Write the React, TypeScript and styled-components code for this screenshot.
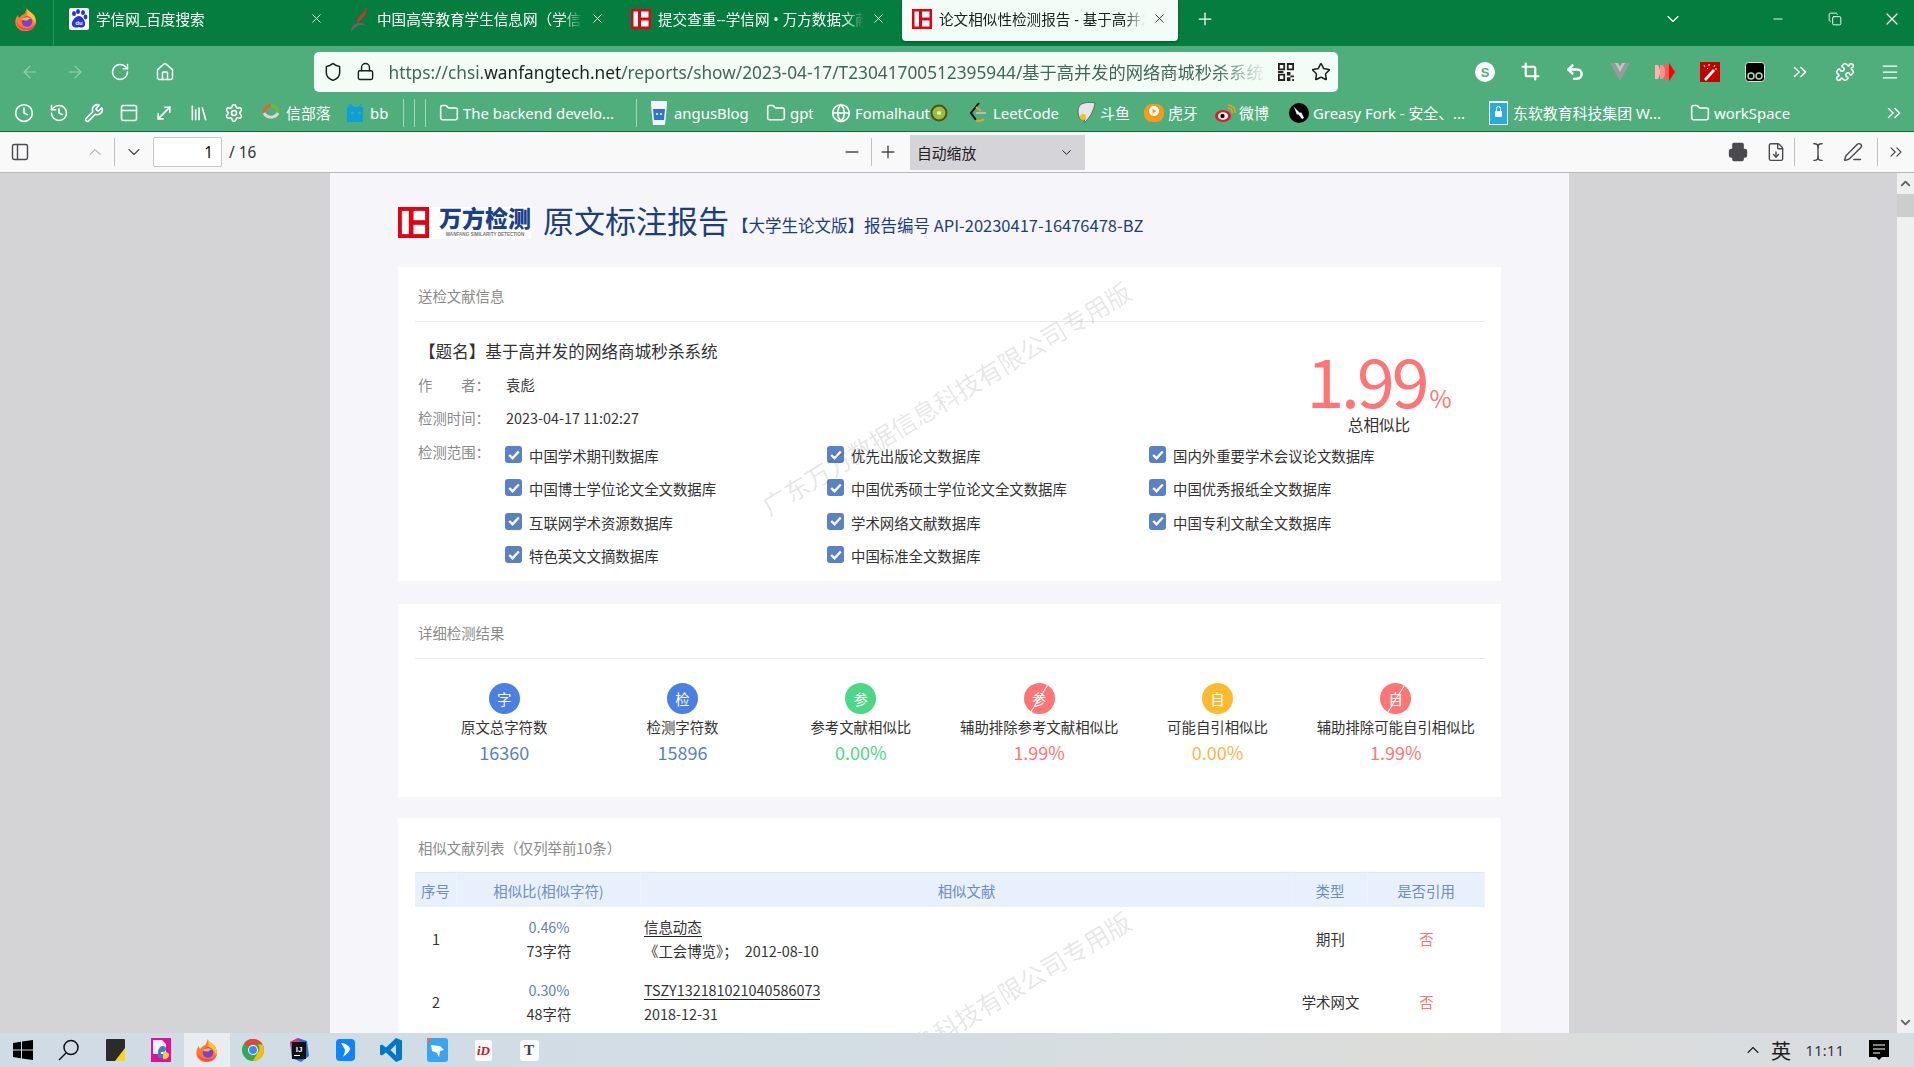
import * as React from 'react';
import styled, { createGlobalStyle } from 'styled-components';
import {
  ArrowLeft,
  ArrowRight,
  ChevronDown,
  ChevronUp,
  ChevronsRight,
  Clock,
  Copy,
  Crop,
  FileDown,
  Folder,
  Globe,
  History,
  House,
  Library,
  Lock,
  Menu,
  Minus,
  MoveDiagonal,
  PanelLeft,
  PanelTop,
  PenLine,
  Plus,
  Printer,
  Puzzle,
  RotateCw,
  Settings,
  Shield,
  Star,
  TextCursor,
  Undo2,
  Wrench,
  X,
} from 'lucide-react';

const UI_FONT = `"Noto Sans", "Noto Sans CJK SC", sans-serif`;
const DOC_FONT = `"Noto Sans CJK SC", "Noto Sans", sans-serif`;

const GlobalStyle = createGlobalStyle`
  html, body {
    margin: 0;
    height: 100%;
    overflow: hidden;
  }
  body {
    font-family: ${UI_FONT};
  }
  * {
    box-sizing: border-box;
  }
`;

const Screen = styled.div`
  width: 1914px;
  height: 1067px;
  display: flex;
  flex-direction: column;
  overflow: hidden;
`;

/* browser chrome */

const TabBar = styled.div`
  height: 46px;
  flex: none;
  background-color: #047d3e;
  display: flex;
  align-items: flex-start;
  color: #fff;
`;

const AppButton = styled.div`
  width: 54px;
  height: 46px;
  flex: none;
  display: flex;
  align-items: center;
  justify-content: center;
  padding: 0 0 8px 0;
  border-right: 1px solid #2a9360;
  margin-right: 5px;
`;

const Tab = styled.div<{ $active?: boolean }>`
  width: 276px;
  height: 41px;
  flex: none;
  margin-right: 5px;
  display: flex;
  align-items: center;
  padding: 0 11px 4px 10px;
  gap: 7px;
  font-size: 14.6px;
  border-radius: 0 0 4px 4px;
  background-color: ${(p) => (p.$active ? '#f3fcf7' : 'transparent')};
  color: ${(p) => (p.$active ? '#15231b' : '#fff')};
  box-shadow: ${(p) => (p.$active ? '0 1px 3px rgba(0, 0, 0, 0.3)' : 'none')};
`;

const TabTitle = styled.div`
  flex: 1;
  white-space: nowrap;
  overflow: hidden;
  mask-image: linear-gradient(to right, #000 90%, transparent);
`;

const NewTab = styled.div`
  width: 44px;
  height: 37px;
  flex: none;
  display: flex;
  align-items: center;
  justify-content: center;
`;

const WindowControls = styled.div`
  margin-left: auto;
  height: 38px;
  display: flex;
  align-items: center;
  gap: 35px;
  padding-right: 11px;
`;

const IconSlot = styled.div<{ $w: number; $mr?: number }>`
  width: ${(p) => p.$w}px;
  flex: none;
  display: flex;
  align-items: center;
  justify-content: center;
  margin-right: ${(p) => p.$mr || 0}px;
`;

const NavBar = styled.div`
  height: 46px;
  flex: none;
  background-color: #50ae7c;
  display: flex;
  align-items: center;
  padding: 5px 0 0 7.5px;
  color: #fff;
`;

const AddressBar = styled.div`
  width: 1024px;
  height: 40px;
  flex: none;
  margin: 0 125px 0 126px;
  background-color: #f3fcf7;
  border-radius: 5px;
  display: flex;
  align-items: center;
  padding-left: 9px;
  color: #15231b;
`;

const UrlText = styled.div`
  width: 879px;
  flex: none;
  font-size: 17.25px;
  color: #42665a;
  white-space: nowrap;
  overflow: hidden;
  mask-image: linear-gradient(to right, #000 94%, transparent);
`;

const UrlHost = styled.span`
  color: #15231b;
`;

const BookmarkBar = styled.div`
  height: 40px;
  flex: none;
  background-color: #50ae7c;
  border-bottom: 1px solid #04743a;
  display: flex;
  align-items: center;
  padding: 2px 0 0 6.5px;
  color: #fff;
  font-size: 14.9px;
`;

const Bookmark = styled.div<{ $w?: number; $ml?: number }>`
  width: ${(p) => (p.$w ? `${p.$w}px` : 'auto')};
  margin-left: ${(p) => p.$ml || 0}px;
  flex: none;
  display: flex;
  align-items: center;
  white-space: nowrap;
`;

const BookmarkIcon = styled.div`
  width: 24px;
  flex: none;
  display: flex;
  align-items: center;
`;

const BookmarkSep = styled.div<{ $mr: number }>`
  width: 1px;
  height: 28px;
  flex: none;
  background-color: #a7d6bc;
  margin-right: ${(p) => p.$mr}px;
`;

const Overflow = styled.div`
  margin-left: auto;
  padding-right: 9px;
  display: flex;
`;

/* pdf viewer */

const PdfToolbar = styled.div`
  height: 41px;
  flex: none;
  background-color: #f9f9fa;
  border-bottom: 1px solid #b8b8b8;
  display: flex;
  align-items: center;
  color: #4a4a4f;
  font-size: 15.4px;
`;

const ToolSep = styled.div<{ $mr?: number }>`
  width: 1px;
  height: 28px;
  flex: none;
  background-color: #c0c0c4;
  margin-right: ${(p) => p.$mr || 0}px;
`;

const PageInput = styled.div`
  width: 69px;
  height: 30px;
  flex: none;
  margin-right: 7px;
  background-color: #fff;
  border: 1px solid #c8c8cc;
  border-radius: 2px;
  display: flex;
  align-items: center;
  justify-content: flex-end;
  padding-right: 8px;
  color: #0c0c0d;
`;

const PageCount = styled.div`
  width: 604px;
  flex: none;
  color: #333;
`;

const ZoomSelect = styled.div`
  width: 175px;
  height: 35px;
  flex: none;
  margin-left: 6px;
  background-color: #d4d4d9;
  display: flex;
  align-items: center;
  justify-content: space-between;
  padding: 0 11px 0 7px;
  font-size: 14.8px;
  color: #222;
`;

const ToolSpacer = styled.div`
  width: 634px;
  flex: none;
`;

const Viewer = styled.div`
  flex: 1;
  min-height: 0;
  display: flex;
  background-color: #d4d4d7;
`;

const PageArea = styled.div`
  flex: 1;
  display: flex;
  justify-content: center;
  overflow: hidden;
  padding-left: 2px;
`;

const Scrollbar = styled.div`
  width: 17px;
  flex: none;
  background-color: #f0f0f0;
  display: flex;
  flex-direction: column;
  align-items: center;
  color: #606060;
`;

const ScrollButton = styled.div`
  height: 21px;
  flex: none;
  display: flex;
  align-items: center;
  justify-content: center;
`;

const ScrollThumb = styled.div`
  width: 100%;
  height: 23px;
  flex: none;
  background-color: #cdcdcd;
`;

const ScrollTrack = styled.div`
  flex: 1;
`;

const Page = styled.div`
  position: relative;
  width: 1239px;
  flex: none;
  background-color: #f5f5fa;
  padding: 0 68px;
  font-family: ${DOC_FONT};
  overflow: hidden;
`;

const Watermark = styled.div<{ $top: number }>`
  position: absolute;
  left: 616px;
  top: ${(p) => p.$top}px;
  transform: translate(-50%, -50%) rotate(-31deg);
  font-size: 25px;
  line-height: 1;
  white-space: nowrap;
  color: rgba(0, 0, 0, 0.11);
  pointer-events: none;
`;

const ReportHeader = styled.div`
  height: 35px;
  margin: 32px 0 27px;
  display: flex;
  align-items: center;
`;

const LogoBlock = styled.div`
  height: 32px;
  flex: none;
  display: flex;
  align-items: center;
  gap: 10px;
  background-color: #fff;
`;

const LogoWords = styled.div`
  display: flex;
  flex-direction: column;
  align-items: center;
  margin-top: -3px;
  color: #1a3f8c;
`;

const LogoName = styled.div`
  font-size: 23px;
  line-height: 25px;
  font-weight: 900;
  white-space: nowrap;
`;

const LogoSub = styled.div`
  margin-top: 2px;
  font-family: "Liberation Sans", sans-serif;
  font-size: 4.6px;
  line-height: 6px;
  font-weight: 700;
  color: #777;
  white-space: nowrap;
`;

const ReportTitle = styled.div`
  margin: -7px 0 0 12px;
  font-size: 31px;
  color: #1c3f7c;
  white-space: nowrap;
`;

const ReportMeta = styled.div`
  margin: 5px 0 0 3px;
  font-size: 16.5px;
  color: #1c3f7c;
  white-space: nowrap;
`;

const Card = styled.section<{ $mb?: number }>`
  background-color: #fff;
  padding: 0 16px 0 17px;
  margin-bottom: ${(p) => p.$mb || 0}px;
`;

const CardTitle = styled.div<{ $divided?: boolean }>`
  height: 55px;
  padding: 19px 0 0 3px;
  font-size: 14.4px;
  line-height: 20px;
  color: #8a8a8a;
  border-bottom: ${(p) => (p.$divided ? '1.5px solid #e9e9ec' : 'none')};
`;

const InfoTop = styled.div`
  display: flex;
  height: 117px;
  padding: 12px 0 0 3px;
`;

const InfoFields = styled.div`
  flex: 1;
`;

const DocTitle = styled.div`
  height: 34px;
  margin-left: 1px;
  font-size: 16.6px;
  line-height: 34px;
  color: #333;
  white-space: nowrap;
`;

const FieldRow = styled.div`
  height: 33px;
  display: flex;
  font-size: 14.4px;
  line-height: 33px;
  color: #333;
`;

const FieldLabel = styled.div`
  width: 88px;
  flex: none;
  color: #8a8a8a;
  white-space: pre;
`;

const Score = styled.div`
  width: 212px;
  flex: none;
  margin-top: 28px;
  display: flex;
  flex-direction: column;
  align-items: center;
`;

const ScoreValue = styled.div`
  font-size: 68px;
  line-height: 33px;
  letter-spacing: -3px;
  color: #ff7474;
  white-space: nowrap;
`;

const ScorePercent = styled.span`
  font-size: 24px;
  letter-spacing: 0;
  margin-left: 3px;
`;

const ScoreLabel = styled.div`
  font-size: 15.6px;
  line-height: 20px;
  color: #333;
`;

const RangeRow = styled.div`
  display: flex;
  padding: 0 0 9px 3px;
  font-size: 14.4px;
`;

const RangeLabel = styled.div`
  width: 87px;
  flex: none;
  line-height: 26px;
  color: #8a8a8a;
`;

const RangeGrid = styled.div`
  flex: 1;
  display: grid;
  grid-template-columns: repeat(3, 322px);
  grid-auto-rows: 33.3px;
`;

const RangeItem = styled.div`
  display: flex;
  align-items: center;
  gap: 7px;
  color: #333;
  white-space: nowrap;
`;

const CheckBox = styled.div`
  width: 17px;
  height: 17px;
  flex: none;
  margin-top: -2px;
  border-radius: 3px;
  background-color: #5a80c8;
  display: flex;
  align-items: center;
  justify-content: center;
`;

const StatsRow = styled.div`
  display: grid;
  grid-template-columns: repeat(6, 1fr);
  padding: 24px 0 33px;
`;

const Stat = styled.div`
  display: flex;
  flex-direction: column;
  align-items: center;
`;

const StatBadge = styled.div<{ $color: string; $struck?: boolean }>`
  position: relative;
  width: 31px;
  height: 31px;
  border-radius: 50%;
  overflow: hidden;
  background-color: ${(p) => p.$color};
  color: #fff;
  font-size: 14.4px;
  display: flex;
  align-items: center;
  justify-content: center;
  &::after {
    content: '';
    display: ${(p) => (p.$struck ? 'block' : 'none')};
    position: absolute;
    left: 50%;
    top: 50%;
    width: 34px;
    height: 1px;
    background-color: #fff;
    transform: translate(-50%, -50%) rotate(-58deg);
  }
`;

const StatLabel = styled.div`
  margin-top: 3px;
  font-size: 14.4px;
  line-height: 20px;
  color: #333;
  white-space: nowrap;
`;

const StatValue = styled.div<{ $color: string }>`
  margin-top: 3px;
  font-size: 18px;
  line-height: 24px;
  color: ${(p) => p.$color};
`;

const ListTitle = styled(CardTitle)`
  height: 54px;
  padding-top: 20px;
`;

const SimilarTable = styled.div`
  display: grid;
  grid-template-columns: 42px 184px 652px 75px 117px;
  font-size: 14.4px;
  color: #333;
`;

const HeadCell = styled.div`
  height: 35px;
  background-color: #e8f0fb;
  border-top: 1px solid #e4e6ea;
  border-right: 1px solid #edf2fb;
  display: flex;
  align-items: center;
  justify-content: center;
  color: #6d8cc9;
  white-space: nowrap;
`;

const Cell = styled.div`
  height: 63px;
  display: flex;
  flex-direction: column;
  align-items: center;
  justify-content: center;
  gap: 4px;
  line-height: 20px;
  white-space: nowrap;
`;

const DocCell = styled(Cell)`
  align-items: flex-start;
  padding-left: 3px;
`;

const DocLink = styled.span`
  border-bottom: 1px solid #222;
  line-height: 19px;
`;

const Ratio = styled.span`
  color: #5b7fc7;
`;

const NotCited = styled.span`
  color: #ff7474;
`;

/* taskbar */

const Taskbar = styled.div`
  height: 34px;
  flex: none;
  background: linear-gradient(to right, #d0dbe5 0%, #d3dde4 45%, #dcdcd9 75%, #d8dde2 100%);
  display: flex;
  align-items: center;
`;

const TaskIcon = styled.div<{ $active?: boolean }>`
  width: 46px;
  height: 34px;
  flex: none;
  display: flex;
  align-items: center;
  justify-content: center;
  background-color: ${(p) => (p.$active ? '#e8edf2' : 'transparent')};
`;

const Tray = styled.div`
  margin-left: auto;
  display: flex;
  align-items: center;
  color: #1c1c1c;
`;

const ImeGlyph = styled.div`
  width: 30px;
  font-size: 20px;
  text-align: center;
`;

const ClockText = styled.div`
  width: 58px;
  font-size: 14.4px;
  letter-spacing: 0.4px;
  text-align: center;
  color: #333;
`;

const TextTile = styled.div`
  width: 19px;
  height: 21px;
  background-color: #fbfbfb;
  border-radius: 3px;
  font-family: "Liberation Serif", serif;
  font-weight: 700;
  font-size: 15px;
  line-height: 21px;
  text-align: center;
  color: #444;
`;

/* drawn icons */

const Firefox = ({ size = 20 }: { size?: number }) => (
  <svg width={size} height={size} viewBox="0 0 24 24">
    <path d="M12 0c1 3 5 4 8 8 3 5 2 11-2 14-4 3-11 3-15-1C-1 17 0 11 3 7c0 2 1 3 2 3 1-2 3-3 5-4 1-2 2-4 2-6z" fill="#ff7a2e" />
    <path d="M12 0c1 3 5 4 8 8 2 3 2 6 1 9-1-4-4-8-8-9 0-3 0-5-1-8z" fill="#ffc42e" />
    <path d="M1 14c1 6 6 9 11 9 5 0 9-3 10-8-2 4-6 6-10 6-5 0-9-3-11-7z" fill="#ff3d68" />
    <circle cx="12.500" cy="14" r="5.500" fill="#7b3fd1" />
    <path d="M7 12c2-3 7-3 10-1-2 0-3 1-4 2-2 0-5 0-6-1z" fill="#ffb13d" />
  </svg>
);

const WanfangMark = ({ size = 20 }: { size?: number }) => (
  <svg width={size} height={size} viewBox="0 0 20 20">
    <rect width="20" height="20" fill="#e60012" />
    <rect x="2.500" y="2.500" width="4.500" height="15" fill="#fff" />
    <rect x="10" y="2.500" width="7.500" height="6" fill="#fff" />
    <rect x="10" y="11.500" width="7.500" height="6" fill="#fff" />
  </svg>
);

const BaiduPaw = () => (
  <svg width="20" height="22" viewBox="0 0 20 22">
    <rect width="20" height="22" rx="2" fill="#fff" />
    <g fill="#2932e1">
      <ellipse cx="5" cy="5.500" rx="2" ry="2.600" />
      <ellipse cx="9" cy="3.500" rx="2" ry="2.600" />
      <ellipse cx="14" cy="4.500" rx="2" ry="2.600" />
      <ellipse cx="16.500" cy="9" rx="1.900" ry="2.400" />
      <path d="M10 8c3 0 7 5 6 9-1 3-4 3-6 2-2 1-6 1-7-2s3-9 7-9z" />
    </g>
    <text x="10" y="17" fontSize="6" fontFamily="Liberation Sans" fontWeight="700" fill="#fff" textAnchor="middle">
      du
    </text>
  </svg>
);

const ChsiMark = () => (
  <svg width="20" height="26" viewBox="0 0 20 26">
    <path d="M16 0c-1 6-3 7-6 10-3 3-4 7-1 9-1-4 4-7 6-10 1-3 2-6 1-9z" fill="#d8302a" />
    <path d="M1 26c0-6 3-9 9-9 3 0 5 1 5 3-3-2-7-1-9 1-2 1-3 3-5 5z" fill="#5d6b66" />
  </svg>
);

const StatIconS = () => (
  <svg width="20" height="20" viewBox="0 0 20 20">
    <circle cx="10" cy="10" r="10" fill="#fff" />
    <text x="10" y="14.500" fontSize="13" fontWeight="700" fontFamily="Liberation Sans" fill="#50ae7c" textAnchor="middle">
      S
    </text>
  </svg>
);

const VueMark = () => (
  <svg width="20" height="18" viewBox="0 0 20 18">
    <path d="M0 0h6l4 7 4-7h6L10 18z" fill="#9a9a9a" />
    <path d="M5 0h3l2 3.500L12 0h3l-5 9z" fill="#c4c4c4" />
  </svg>
);

const RedArrows = () => (
  <svg width="20" height="18" viewBox="0 0 20 18">
    <path d="M0 2h3l3 7-3 7H0z" fill="#ffb3b3" />
    <path d="M5 2h3l3 7-3 7H5z" fill="#ff8f8f" />
    <path d="M10 1h3l3 8-3 8h-3z" fill="#ff5a5a" />
    <path d="M14 0l6 9-6 9z" fill="#ff0000" />
  </svg>
);

const WandTile = () => (
  <svg width="20" height="20" viewBox="0 0 20 20">
    <rect width="20" height="20" fill="#c40000" />
    <path d="M4 17l9-10 2 2-9 10z" fill="#fff" />
    <path d="M4 3l1 2M9 2v2M15 3l-1 2M17 7h-2M7 6l1 1" stroke="#fff" strokeWidth="1" />
  </svg>
);

const TamperTile = () => (
  <svg width="20" height="20" viewBox="0 0 20 20">
    <rect x="0.500" y="0.500" width="19" height="19" rx="3" fill="#000" stroke="#cfe6da" />
    <circle cx="6" cy="14" r="3" fill="none" stroke="#a6dfbf" strokeWidth="1.500" />
    <circle cx="14" cy="14" r="3" fill="none" stroke="#a6dfbf" strokeWidth="1.500" />
  </svg>
);

const QrCode = () => (
  <svg width="16" height="18" viewBox="0 0 9 10" fill="#222">
    <path d="M0 0h4v4H0zM1 1v2h2V1zM5 0h4v4H5zM6 1v2h2V1zM0 6h4v4H0zM1 7v2h2V7zM5 5h2v2H5zM7 7h2v1H7zM5 8h2v2H5zM8 9h1v1H8zM0 4.500h3v1H0z" fillRule="evenodd" />
  </svg>
);

const WindowsLogo = () => (
  <svg width="20" height="20" viewBox="0 0 20 20" fill="#000">
    <path d="M0 3l8-1.200V9.500H0zM9 1.600L20 0v9.500H9zM0 10.500h8v7.700L0 17zM9 10.500h11V20L9 18.400z" />
  </svg>
);

const SearchGlass = () => (
  <svg width="22" height="22" viewBox="0 0 22 22" fill="none" stroke="#111" strokeWidth="1.500">
    <circle cx="13" cy="8.500" r="7" />
    <path d="M8 14l-7 7" />
  </svg>
);

const StickyNote = () => (
  <svg width="19" height="22" viewBox="0 0 19 22">
    <rect width="19" height="22" rx="1" fill="#2b2b2b" />
    <path d="M19 9v13H9z" fill="#ffd21f" />
  </svg>
);

const PyCharmTile = () => (
  <svg width="20" height="24" viewBox="0 0 20 24">
    <rect width="20" height="24" fill="#e0109a" />
    <path d="M2 2h9l4 4v10H2z" fill="#f4f1f6" />
    <path d="M9 9c3-2 6-1 6 2s-3 3-5 3v3h5c0 3-6 5-8 2v-6c0-2 2-3 2-4z" fill="#3f7fc0" />
    <path d="M12 14c3 0 6 0 6 3s-3 5-6 4z" fill="#f6c93f" />
  </svg>
);

const ChromeLogo = () => (
  <svg width="22" height="22" viewBox="0 0 22 22">
    <circle cx="11" cy="11" r="11" fill="#34a853" />
    <path d="M11 0a11 11 0 0 1 9.500 5.500H11a5.500 5.500 0 0 0-5 3L2.500 3.800A11 11 0 0 1 11 0z" fill="#ea4335" />
    <path d="M20.500 5.500A11 11 0 0 1 11 22l4.700-8.300a5.500 5.500 0 0 0 0-8.200z" fill="#fbbc05" />
    <circle cx="11" cy="11" r="5" fill="#fff" />
    <circle cx="11" cy="11" r="4" fill="#4285f4" />
  </svg>
);

const IdeaTile = () => (
  <svg width="20" height="24" viewBox="0 0 20 24">
    <path d="M1 4l8-4 9 3 2 15-8 6-9-4z" fill="#2c6be0" />
    <path d="M1 4l8-4 3 6-9 6z" fill="#e8336b" />
    <rect x="3" y="4" width="14" height="17" fill="#111" />
    <text x="10" y="14" fontSize="8" fontWeight="700" fontFamily="Liberation Sans" fill="#fff" textAnchor="middle">
      IJ
    </text>
    <rect x="5" y="17" width="6" height="1" fill="#fff" />
  </svg>
);

const BlueFeather = () => (
  <svg width="19" height="22" viewBox="0 0 19 22">
    <rect width="19" height="22" rx="4" fill="#0a84ff" />
    <path d="M5 4c4 0 9 3 9 6-1 4-5 6-7 8 1-3 2-5 2-7-1-3-3-5-4-7z" fill="#fff" />
  </svg>
);

const VsCode = () => (
  <svg width="22" height="24" viewBox="0 0 22 24">
    <path d="M16 0l6 2.500v19L16 24 6 14.500 2 17.500 0 16.500V7.500l2-1 4 3zM16 6.500L10.500 12l5.500 5.500z" fill="#0078c8" fillRule="evenodd" />
  </svg>
);

const BirdTile = () => (
  <svg width="21" height="24" viewBox="0 0 21 24">
    <rect width="21" height="24" rx="3" fill="#3ca3f0" />
    <path d="M4 7l9 1 4 4-4 1-1 6-2-4-5-2z" fill="#fff" />
    <path d="M0 0h5L0 5z" fill="#f26b3a" />
  </svg>
);

const RedDTile = () => (
  <svg width="17" height="21" viewBox="0 0 17 21">
    <rect width="17" height="21" rx="2" fill="#fafafa" />
    <text x="8.500" y="15" fontSize="13" fontWeight="700" fontStyle="italic" fontFamily="Liberation Serif" fill="#d01420" textAnchor="middle">
      iD
    </text>
  </svg>
);

const NotifyIcon = () => (
  <svg width="20" height="21" viewBox="0 0 20 21">
    <path d="M0 0h20v17h-7l-3 3-3-3H0z" fill="#000" />
    <path d="M4 5h12M4 9h12M4 13h7" stroke="#fff" strokeWidth="1" />
  </svg>
);

const CheckMark = () => (
  <svg width="12" height="10" viewBox="0 0 12 10" fill="none" stroke="#fff" strokeWidth="2.400">
    <path d="M1.200 5l3.300 3.200L10.800 1.500" />
  </svg>
);

const XinbuluoIcon = () => (
  <svg width="18" height="20" viewBox="0 0 18 20" fill="none" strokeWidth="3">
    <path d="M9 2a8 8 0 0 0-7 8" stroke="#e8632a" />
    <path d="M9 2a8 8 0 0 1 7 8" stroke="#6dbb3a" />
    <path d="M2 10a8 8 0 0 0 14 0" stroke="#d9d9d9" />
  </svg>
);

const BilibiliIcon = () => (
  <svg width="20" height="20" viewBox="0 0 20 20">
    <path d="M5 1l3 3h4l3-3 1 1-2 2h3v15H1V4h3L2 2z" fill="#0e9fd8" />
    <circle cx="6.500" cy="10" r="1.300" fill="#50ae7c" />
    <circle cx="13.500" cy="10" r="1.300" fill="#50ae7c" />
  </svg>
);

const CupIcon = () => (
  <svg width="18" height="24" viewBox="0 0 18 24">
    <path d="M1 0h16v4l-2 20H3L1 4z" fill="#f3f6fb" />
    <path d="M3 8h12l-1 11H4z" fill="#2f74d0" />
    <circle cx="7" cy="13" r="1" fill="#fff" />
    <circle cx="11" cy="13" r="1" fill="#fff" />
  </svg>
);

const LeetCodeIcon = () => (
  <svg width="18" height="22" viewBox="0 0 18 22" fill="none" strokeWidth="2">
    <path d="M10 1L2 11l5 7" stroke="#111" />
    <path d="M7 18c2 2 6 1 8-1" stroke="#f0a020" />
    <path d="M7 11h10" stroke="#b9b9b9" />
    <path d="M7 5l5 4" stroke="#f0a020" />
  </svg>
);

const DouyuIcon = () => (
  <svg width="20" height="22" viewBox="0 0 20 22">
    <path d="M4 3c4-3 11-3 15-2-1 6-4 13-9 18l-2 2 1-5-5 1c-2-4-3-10 0-14z" fill="#e5e5e5" stroke="#555" strokeWidth="0.800" />
    <circle cx="7" cy="15" r="3" fill="#f3c01c" />
  </svg>
);

const HuyaIcon = () => (
  <svg width="20" height="20" viewBox="0 0 20 20">
    <rect y="1" width="20" height="18" rx="8" fill="#f79a1c" />
    <circle cx="10" cy="8" r="5" fill="#fff" />
    <path d="M8.500 5.500l4 2.500-4 2.500z" fill="#f79a1c" />
  </svg>
);

const WeiboIcon = () => (
  <svg width="21" height="18" viewBox="0 0 21 18">
    <ellipse cx="8" cy="12" rx="8" ry="6" fill="#e6162d" />
    <ellipse cx="8" cy="12" rx="5" ry="3.800" fill="#fff" />
    <circle cx="7.500" cy="12" r="2.200" fill="#111" />
    <path d="M13 1a7 7 0 0 1 7 8M13 4a4 4 0 0 1 4 5" fill="none" stroke="#f59a23" strokeWidth="1.600" />
  </svg>
);

const GreasyIcon = () => (
  <svg width="20" height="20" viewBox="0 0 20 20">
    <circle cx="10" cy="10" r="10" fill="#000" />
    <path d="M5 4l6 6 1-1 3 6-2 1-4-5-1 1z" fill="#fff" />
  </svg>
);

const NeusoftIcon = () => (
  <svg width="19" height="24" viewBox="0 0 19 24">
    <rect width="19" height="24" fill="#fff" />
    <rect x="1" y="2" width="17" height="21" fill="#29abe2" />
    <rect x="6" y="10" width="7" height="6" rx="1" fill="#fff" />
    <path d="M7.500 10V7.500a2 2 0 0 1 4 0V10" fill="none" stroke="#fff" />
  </svg>
);

const KiwiIcon = () => (
  <svg width="18" height="18" viewBox="0 0 18 18">
    <circle cx="9" cy="9" r="8.500" fill="#5c4a24" />
    <circle cx="9" cy="9" r="6.500" fill="#98bf3a" />
    <circle cx="9" cy="9" r="2" fill="#ecedc5" />
  </svg>
);

const ICON = { size: 20, strokeWidth: 1.9 };
const TOOL = { size: 20, strokeWidth: 1.7 };

const RANGES = [
  '中国学术期刊数据库',
  '优先出版论文数据库',
  '国内外重要学术会议论文数据库',
  '中国博士学位论文全文数据库',
  '中国优秀硕士学位论文全文数据库',
  '中国优秀报纸全文数据库',
  '互联网学术资源数据库',
  '学术网络文献数据库',
  '中国专利文献全文数据库',
  '特色英文文摘数据库',
  '中国标准全文数据库',
];

const STATS = [
  { glyph: '字', label: '原文总字符数', value: '16360', badge: '#4a80e2', color: '#5b7fc7' },
  { glyph: '检', label: '检测字符数', value: '15896', badge: '#4a80e2', color: '#5b7fc7' },
  { glyph: '参', label: '参考文献相似比', value: '0.00%', badge: '#4cd787', color: '#4cd787' },
  { glyph: '参', label: '辅助排除参考文献相似比', value: '1.99%', badge: '#ff7474', color: '#ff7474', struck: true },
  { glyph: '自', label: '可能自引相似比', value: '0.00%', badge: '#ffb92e', color: '#ffb248' },
  { glyph: '自', label: '辅助排除可能自引相似比', value: '1.99%', badge: '#ff7474', color: '#ff7474', struck: true },
];

const ROWS = [
  { no: '1', ratio: '0.46%', chars: '73字符', title: '信息动态', source: '《工会博览》；\u20022012-08-10', type: '期刊' },
  { no: '2', ratio: '0.30%', chars: '48字符', title: 'TSZY132181021040586073', source: '2018-12-31', type: '学术网文' },
];

const App = () => (
  <Screen>
    <GlobalStyle />
    <TabBar>
      <AppButton>
        <Firefox size={23} />
      </AppButton>
      <Tab>
        <BaiduPaw />
        <TabTitle>学信网_百度搜索</TabTitle>
        <X size={15} strokeWidth={1.4} />
      </Tab>
      <Tab>
        <ChsiMark />
        <TabTitle>中国高等教育学生信息网（学信网）</TabTitle>
        <X size={15} strokeWidth={1.4} />
      </Tab>
      <Tab>
        <WanfangMark />
        <TabTitle>提交查重--学信网 • 万方数据文献相似性</TabTitle>
        <X size={15} strokeWidth={1.4} />
      </Tab>
      <Tab $active>
        <WanfangMark />
        <TabTitle>论文相似性检测报告 - 基于高并发的网络</TabTitle>
        <X size={15} strokeWidth={1.4} />
      </Tab>
      <NewTab>
        <Plus size={20} strokeWidth={1.5} />
      </NewTab>
      <WindowControls>
        <IconSlot $w={22} $mr={48}>
          <ChevronDown size={20} strokeWidth={1.4} />
        </IconSlot>
        <IconSlot $w={22}>
          <Minus size={14} strokeWidth={1.6} />
        </IconSlot>
        <IconSlot $w={22}>
          <Copy size={14} strokeWidth={1.6} />
        </IconSlot>
        <IconSlot $w={22}>
          <X size={20} strokeWidth={1.5} />
        </IconSlot>
      </WindowControls>
    </TabBar>

    <NavBar>
      <IconSlot $w={45}>
        <ArrowLeft size={20} strokeWidth={1.4} color="#93cfae" />
      </IconSlot>
      <IconSlot $w={45}>
        <ArrowRight size={20} strokeWidth={1.4} color="#93cfae" />
      </IconSlot>
      <IconSlot $w={45}>
        <RotateCw size={20} strokeWidth={1.8} />
      </IconSlot>
      <IconSlot $w={45}>
        <House size={20} strokeWidth={1.8} />
      </IconSlot>
      <AddressBar>
        <Shield size={20} strokeWidth={1.8} />
        <IconSlot $w={46}>
          <Lock size={19} strokeWidth={1.8} />
        </IconSlot>
        <UrlText>
          https://chsi.<UrlHost>wanfangtech.net</UrlHost>/reports/show/2023-04-17/T23041700512395944/基于高并发的网络商城秒杀系统
        </UrlText>
        <IconSlot $w={36}>
          <QrCode />
        </IconSlot>
        <IconSlot $w={34}>
          <Star size={20} strokeWidth={1.8} />
        </IconSlot>
      </AddressBar>
      <IconSlot $w={45}>
        <StatIconS />
      </IconSlot>
      <IconSlot $w={45}>
        <Crop size={19} strokeWidth={2.8} />
      </IconSlot>
      <IconSlot $w={45}>
        <Undo2 size={20} strokeWidth={3} />
      </IconSlot>
      <IconSlot $w={45}>
        <VueMark />
      </IconSlot>
      <IconSlot $w={45}>
        <RedArrows />
      </IconSlot>
      <IconSlot $w={45}>
        <WandTile />
      </IconSlot>
      <IconSlot $w={45}>
        <TamperTile />
      </IconSlot>
      <IconSlot $w={45}>
        <ChevronsRight size={22} strokeWidth={1.6} />
      </IconSlot>
      <IconSlot $w={45}>
        <Puzzle {...ICON} />
      </IconSlot>
      <IconSlot $w={45}>
        <Menu size={20} strokeWidth={1.5} />
      </IconSlot>
    </NavBar>

    <BookmarkBar>
      {[Clock, History, Wrench, PanelTop, MoveDiagonal, Library, Settings].map((Icon, i) => (
        <IconSlot $w={35} key={i}>
          <Icon {...ICON} />
        </IconSlot>
      ))}
      <Bookmark $w={84} $ml={10.5}>
        <BookmarkIcon>
          <XinbuluoIcon />
        </BookmarkIcon>
        信部落
      </Bookmark>
      <Bookmark $w={57}>
        <BookmarkIcon>
          <BilibiliIcon />
        </BookmarkIcon>
        bb
      </Bookmark>
      <BookmarkSep $mr={10} />
      <BookmarkSep $mr={10} />
      <BookmarkSep $mr={13} />
      <Bookmark $w={197}>
        <BookmarkIcon>
          <Folder {...ICON} />
        </BookmarkIcon>
        The backend develo...
      </Bookmark>
      <BookmarkSep $mr={13} />
      <Bookmark $w={116}>
        <BookmarkIcon>
          <CupIcon />
        </BookmarkIcon>
        angusBlog
      </Bookmark>
      <Bookmark $w={65}>
        <BookmarkIcon>
          <Folder {...ICON} />
        </BookmarkIcon>
        gpt
      </Bookmark>
      <Bookmark $w={138}>
        <BookmarkIcon>
          <Globe {...ICON} />
        </BookmarkIcon>
        Fomalhaut
        <KiwiIcon />
      </Bookmark>
      <Bookmark $w={107}>
        <BookmarkIcon>
          <LeetCodeIcon />
        </BookmarkIcon>
        LeetCode
      </Bookmark>
      <Bookmark $w={68}>
        <BookmarkIcon>
          <DouyuIcon />
        </BookmarkIcon>
        斗鱼
      </Bookmark>
      <Bookmark $w={71}>
        <BookmarkIcon>
          <HuyaIcon />
        </BookmarkIcon>
        虎牙
      </Bookmark>
      <Bookmark $w={74}>
        <BookmarkIcon>
          <WeiboIcon />
        </BookmarkIcon>
        微博
      </Bookmark>
      <Bookmark $w={200}>
        <BookmarkIcon>
          <GreasyIcon />
        </BookmarkIcon>
        Greasy Fork - 安全、...
      </Bookmark>
      <Bookmark $w={201}>
        <BookmarkIcon>
          <NeusoftIcon />
        </BookmarkIcon>
        东软教育科技集团 W...
      </Bookmark>
      <Bookmark>
        <BookmarkIcon>
          <Folder {...ICON} />
        </BookmarkIcon>
        workSpace
      </Bookmark>
      <Overflow>
        <ChevronsRight size={22} strokeWidth={1.6} />
      </Overflow>
    </BookmarkBar>

    <PdfToolbar>
      <IconSlot $w={40} $mr={36}>
        <PanelLeft {...TOOL} />
      </IconSlot>
      <IconSlot $w={38}>
        <ChevronUp size={20} strokeWidth={1.2} color="#8f8f94" />
      </IconSlot>
      <ToolSep />
      <IconSlot $w={38}>
        <ChevronDown size={20} strokeWidth={1.4} />
      </IconSlot>
      <PageInput>1</PageInput>
      <PageCount>/ 16</PageCount>
      <IconSlot $w={38}>
        <Minus {...TOOL} />
      </IconSlot>
      <ToolSep />
      <IconSlot $w={32}>
        <Plus {...TOOL} />
      </IconSlot>
      <ZoomSelect>
        自动缩放
        <ChevronDown size={15} strokeWidth={1.6} />
      </ZoomSelect>
      <ToolSpacer />
      <IconSlot $w={38}>
        <Printer size={20} strokeWidth={2} fill="#4a4a4f" />
      </IconSlot>
      <IconSlot $w={37}>
        <FileDown {...TOOL} />
      </IconSlot>
      <ToolSep $mr={4} />
      <IconSlot $w={38}>
        <TextCursor {...TOOL} />
      </IconSlot>
      <IconSlot $w={32} $mr={8}>
        <PenLine {...TOOL} />
      </IconSlot>
      <ToolSep />
      <IconSlot $w={36}>
        <ChevronsRight size={20} strokeWidth={1.4} />
      </IconSlot>
    </PdfToolbar>

    <Viewer>
      <PageArea>
        <Page>
          <ReportHeader>
            <LogoBlock>
              <WanfangMark size={31} />
              <LogoWords>
                <LogoName>万方检测</LogoName>
                <LogoSub>WANFANG SIMILARITY DETECTION</LogoSub>
              </LogoWords>
            </LogoBlock>
            <ReportTitle>原文标注报告</ReportTitle>
            <ReportMeta>【大学生论文版】报告编号 API-20230417-16476478-BZ</ReportMeta>
          </ReportHeader>

          <Card $mb={23}>
            <CardTitle $divided>送检文献信息</CardTitle>
            <InfoTop>
              <InfoFields>
                <DocTitle>【题名】基于高并发的网络商城秒杀系统</DocTitle>
                <FieldRow>
                  <FieldLabel>作　　者：</FieldLabel>
                  袁彪
                </FieldRow>
                <FieldRow>
                  <FieldLabel>检测时间：</FieldLabel>
                  2023-04-17 11:02:27
                </FieldRow>
              </InfoFields>
              <Score>
                <ScoreValue>
                  1.99<ScorePercent>%</ScorePercent>
                </ScoreValue>
                <ScoreLabel>总相似比</ScoreLabel>
              </Score>
            </InfoTop>
            <RangeRow>
              <RangeLabel>检测范围：</RangeLabel>
              <RangeGrid>
                {RANGES.map((name) => (
                  <RangeItem key={name}>
                    <CheckBox>
                      <CheckMark />
                    </CheckBox>
                    {name}
                  </RangeItem>
                ))}
              </RangeGrid>
            </RangeRow>
          </Card>

          <Card $mb={21}>
            <CardTitle $divided>详细检测结果</CardTitle>
            <StatsRow>
              {STATS.map((s) => (
                <Stat key={s.label}>
                  <StatBadge $color={s.badge} $struck={s.struck}>
                    {s.glyph}
                  </StatBadge>
                  <StatLabel>{s.label}</StatLabel>
                  <StatValue $color={s.color}>{s.value}</StatValue>
                </Stat>
              ))}
            </StatsRow>
          </Card>

          <Card>
            <ListTitle>相似文献列表（仅列举前10条）</ListTitle>
            <SimilarTable>
              <HeadCell>序号</HeadCell>
              <HeadCell>相似比(相似字符)</HeadCell>
              <HeadCell>相似文献</HeadCell>
              <HeadCell>类型</HeadCell>
              <HeadCell>是否引用</HeadCell>
              {ROWS.map((r) => (
                <React.Fragment key={r.no}>
                  <Cell>{r.no}</Cell>
                  <Cell>
                    <Ratio>{r.ratio}</Ratio>
                    {r.chars}
                  </Cell>
                  <DocCell>
                    <DocLink>{r.title}</DocLink>
                    {r.source}
                  </DocCell>
                  <Cell>{r.type}</Cell>
                  <Cell>
                    <NotCited>否</NotCited>
                  </Cell>
                </React.Fragment>
              ))}
            </SimilarTable>
          </Card>

          <Watermark $top={225}>广东万方数据信息科技有限公司专用版</Watermark>
          <Watermark $top={855}>广东万方数据信息科技有限公司专用版</Watermark>
        </Page>
      </PageArea>
      <Scrollbar>
        <ScrollButton>
          <ChevronUp size={15} strokeWidth={3} />
        </ScrollButton>
        <ScrollThumb />
        <ScrollTrack />
        <ScrollButton>
          <ChevronDown size={15} strokeWidth={3} />
        </ScrollButton>
      </Scrollbar>
    </Viewer>

    <Taskbar>
      <TaskIcon>
        <WindowsLogo />
      </TaskIcon>
      <TaskIcon>
        <SearchGlass />
      </TaskIcon>
      <TaskIcon>
        <StickyNote />
      </TaskIcon>
      <TaskIcon>
        <PyCharmTile />
      </TaskIcon>
      <TaskIcon $active>
        <Firefox size={23} />
      </TaskIcon>
      <TaskIcon>
        <ChromeLogo />
      </TaskIcon>
      <TaskIcon>
        <IdeaTile />
      </TaskIcon>
      <TaskIcon>
        <BlueFeather />
      </TaskIcon>
      <TaskIcon>
        <VsCode />
      </TaskIcon>
      <TaskIcon>
        <BirdTile />
      </TaskIcon>
      <TaskIcon>
        <RedDTile />
      </TaskIcon>
      <TaskIcon>
        <TextTile>T</TextTile>
      </TaskIcon>
      <Tray>
        <IconSlot $w={20} $mr={3}>
          <ChevronUp size={20} strokeWidth={1.3} />
        </IconSlot>
        <ImeGlyph>英</ImeGlyph>
        <ClockText>11:11</ClockText>
        <IconSlot $w={50} $mr={10}>
          <NotifyIcon />
        </IconSlot>
      </Tray>
    </Taskbar>
  </Screen>
);

export default App;
